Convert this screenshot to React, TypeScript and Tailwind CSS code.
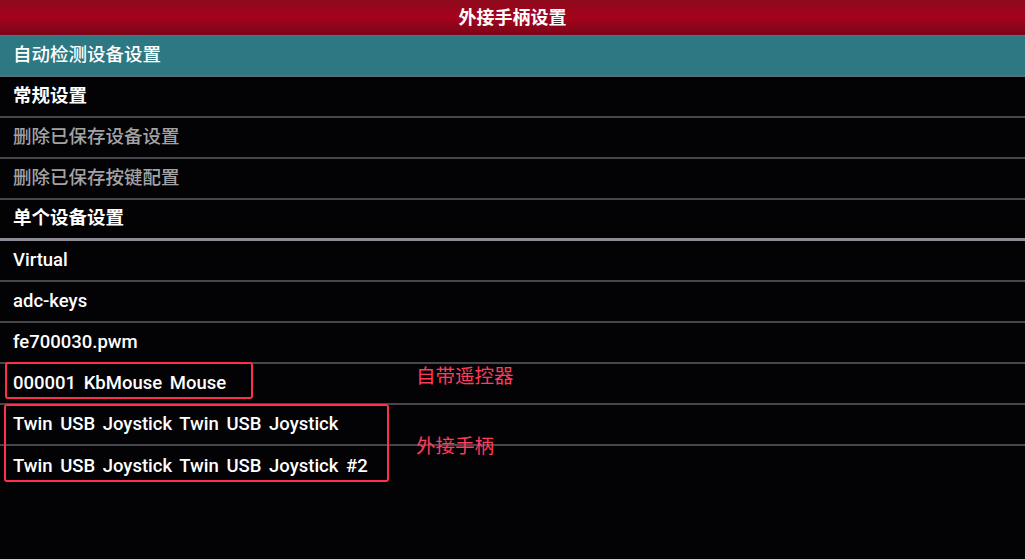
import React from 'react';

type Row = { label: string; tone: 'bold' | 'dim' | 'plain'; divider?: 'thin' | 'thick' | 'none' };

const rows: Row[] = [
  { label: '常规设置', tone: 'bold' },
  { label: '删除已保存设备设置', tone: 'dim' },
  { label: '删除已保存按键配置', tone: 'dim' },
  { label: '单个设备设置', tone: 'bold', divider: 'thick' },
  { label: 'Virtual', tone: 'plain' },
  { label: 'adc-keys', tone: 'plain' },
  { label: 'fe700030.pwm', tone: 'plain' },
];

const font = { fontFamily: 'Roboto, "Noto Sans CJK SC", sans-serif' };

function ListRow({ row }: { row: Row }) {
  const color =
    row.tone === 'dim' ? 'text-[#a3a3a6] font-medium' : row.tone === 'bold' ? 'text-white font-bold' : 'text-white font-medium';
  const border =
    row.divider === 'thick'
      ? 'border-b-[3px] border-[#8d8c96]'
      : row.divider === 'none'
        ? ''
        : 'border-b-2 border-[#46464c]';
  return (
    <div className={`h-[41px] flex items-center pl-[13px] pb-[1px] text-[18.5px] [word-spacing:3px] ${color} ${border}`}>
      <span className="leading-none">{row.label}</span>
    </div>
  );
}

export default function App() {
  return (
    <main className="w-[1025px] h-[559px] bg-[#030305] overflow-hidden" style={font}>
      <header className="h-[36px] flex items-center justify-center bg-gradient-to-b from-[#8e0a1c] via-[#a5021c] to-[#7a0518] border-b border-[#b04a6a]">
        <h1 className="text-white text-[18px] font-bold leading-none">外接手柄设置</h1>
      </header>

      <div className="h-[41px] flex items-center pl-[13px] pb-[1px] bg-[#2e7883] border-b-2 border-[#5a6c74]">
        <span className="text-white text-[18.5px] font-medium leading-none">自动检测设备设置</span>
      </div>

      {rows.map((row) => (
        <ListRow key={row.label} row={row} />
      ))}

      {/* annotated device rows: red boxes and labels sit over the list */}
      <div className="relative">
        <ListRow row={{ label: '000001 KbMouse Mouse', tone: 'plain' }} />
        <ListRow row={{ label: 'Twin USB Joystick Twin USB Joystick', tone: 'plain' }} />
        <ListRow row={{ label: 'Twin USB Joystick Twin USB Joystick #2', tone: 'plain', divider: 'none' }} />

        <div className="absolute left-[5px] top-[-2px] w-[248px] h-[37px] border-2 border-[#ff2f4f] rounded-[3px]" />
        <div className="absolute left-[4px] top-[40px] w-[385px] h-[78px] border-2 border-[#ff2f4f] rounded-[3px]" />

        <span className="absolute left-[416px] top-[3px] text-[#ff3b5c] text-[19.5px] leading-none">自带遥控器</span>
        <span className="absolute left-[416px] top-[73px] text-[#ff3b5c] text-[19.5px] leading-none">外接手柄</span>
      </div>
    </main>
  );
}
